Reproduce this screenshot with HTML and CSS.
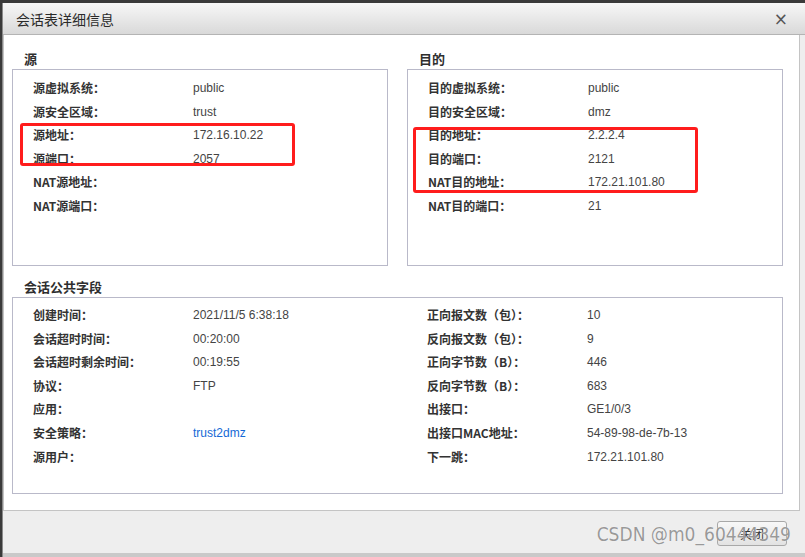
FILE: index.html
```html
<!DOCTYPE html>
<html lang="zh-CN">
<head>
	<meta charset="UTF-8">
	<title>会话表详细信息</title>
	<link rel="stylesheet" href="styles.css">
</head>
<body>
	<div class="dialog">
		<div class="dialog-title">
			<span>会话表详细信息</span>
			<span class="close">&times;</span>
		</div>
		<div class="dialog-body">
			<div class="top-group">
				<div class="group">
					<div class="group-title">源</div>
					<div class="group-box">
						<div class="row"><span class="label">源虚拟系统：</span><span class="value">public</span></div>
						<div class="row"><span class="label">源安全区域：</span><span class="value">trust</span></div>
						<div class="row"><span class="label">源地址：</span><span class="value">172.16.10.22</span></div>
						<div class="row"><span class="label">源端口：</span><span class="value">2057</span></div>
						<div class="row"><span class="label">NAT源地址：</span><span class="value"></span></div>
						<div class="row"><span class="label">NAT源端口：</span><span class="value"></span></div>
						<div class="mark mark-src"></div>
					</div>
				</div>
				<div class="group">
					<div class="group-title">目的</div>
					<div class="group-box">
						<div class="row"><span class="label">目的虚拟系统：</span><span class="value">public</span></div>
						<div class="row"><span class="label">目的安全区域：</span><span class="value">dmz</span></div>
						<div class="row"><span class="label">目的地址：</span><span class="value">2.2.2.4</span></div>
						<div class="row"><span class="label">目的端口：</span><span class="value">2121</span></div>
						<div class="row"><span class="label">NAT目的地址：</span><span class="value">172.21.101.80</span></div>
						<div class="row"><span class="label">NAT目的端口：</span><span class="value">21</span></div>
						<div class="mark mark-dst"></div>
					</div>
				</div>
			</div>
			<div class="group common">
				<div class="group-title">会话公共字段</div>
				<div class="group-box">
					<div class="col">
						<div class="row"><span class="label">创建时间：</span><span class="value">2021/11/5 6:38:18</span></div>
						<div class="row"><span class="label">会话超时时间：</span><span class="value">00:20:00</span></div>
						<div class="row"><span class="label">会话超时剩余时间：</span><span class="value">00:19:55</span></div>
						<div class="row"><span class="label">协议：</span><span class="value">FTP</span></div>
						<div class="row"><span class="label">应用：</span><span class="value"></span></div>
						<div class="row"><span class="label">安全策略：</span><span class="value link">trust2dmz</span></div>
						<div class="row"><span class="label">源用户：</span><span class="value"></span></div>
					</div>
					<div class="col">
						<div class="row"><span class="label">正向报文数（包）：</span><span class="value">10</span></div>
						<div class="row"><span class="label">反向报文数（包）：</span><span class="value">9</span></div>
						<div class="row"><span class="label">正向字节数（B）：</span><span class="value">446</span></div>
						<div class="row"><span class="label">反向字节数（B）：</span><span class="value">683</span></div>
						<div class="row"><span class="label">出接口：</span><span class="value">GE1/0/3</span></div>
						<div class="row"><span class="label">出接口MAC地址：</span><span class="value">54-89-98-de-7b-13</span></div>
						<div class="row"><span class="label">下一跳：</span><span class="value">172.21.101.80</span></div>
					</div>
				</div>
			</div>
		</div>
		<div class="dialog-foot">
			<span class="watermark">CSDN @m0_60444349</span>
			<button class="btn">关闭</button>
		</div>
	</div>
</body>
</html>
```

FILE: styles.css
```css
body {
	margin: 0;
	background: #3a3a3a;
	font-family: "Noto Sans CJK SC", sans-serif;
	color: #333;
	overflow: hidden;
}
.dialog {
	margin: 3px 0 0 2px;
	width: 802px;
	height: 554px;
	background: #eee;
	border-left: 1px solid #8a8a8a;
}
.dialog-title {
	height: 31px;
	background: linear-gradient(#f7f7f7, #d9d9d9);
	border-bottom: 1px solid #b4b4b4;
	display: flex;
	justify-content: space-between;
	align-items: center;
	padding: 0 17px 0 13px;
	font-size: 14px;
	color: #2a2a2a;
}
.close {
	font-family: "DejaVu Sans", sans-serif;
	font-size: 17px;
	color: #555;
}
.dialog-body {
	width: 797px;
	height: 476px;
	box-sizing: border-box;
	background: #fff;
	border: 1px solid #c4c4c4;
	border-top: none;
	padding: 14px 0 0 8px;
}
.top-group {
	display: grid;
	grid-template-columns: 376px 376px;
	column-gap: 19px;
}
.group-title {
	height: 20px;
	line-height: 20px;
	padding-left: 12px;
	font-size: 13px;
	font-weight: bold;
	color: #2e2e2e;
}
.group-box {
	position: relative;
	height: 197px;
	box-sizing: border-box;
	border: 1px solid #b9b9c9;
	padding: 6px 0 0 20px;
}
.common {
	margin-top: 11px;
}
.common .group-box {
	width: 771px;
	display: flex;
	padding-top: 5px;
}
.common .col {
	width: 394px;
	flex-shrink: 0;
}
.common .col + .col {
	width: auto;
	flex: 1;
}
.row {
	display: flex;
	height: 23.6px;
	line-height: 23.6px;
	font-size: 12px;
}
.label {
	width: 160px;
	flex-shrink: 0;
	font-weight: bold;
	color: #333;
}
.value {
	font-family: "Liberation Sans", Arial, sans-serif;
	color: #444;
	padding-top: 1px;
}
.link {
	color: #1469d6;
}
.mark {
	position: absolute;
	border: 3px solid #ff1c1c;
	border-radius: 3px;
}
.mark-src {
	left: 7px;
	top: 53px;
	width: 269px;
	height: 37px;
}
.mark-dst {
	left: 5px;
	top: 57px;
	width: 279px;
	height: 60px;
}
.dialog-foot {
	position: relative;
	height: 46px;
	border-bottom: 4px solid #c9c9c9;
	display: flex;
	justify-content: flex-end;
	align-items: flex-start;
	padding: 10px 18px 0 0;
	box-sizing: border-box;
}
.btn {
	width: 70px;
	height: 25px;
	font-family: "Noto Sans CJK SC", sans-serif;
	font-size: 12px;
	color: #333;
	background: linear-gradient(#f8f8f8, #e2e2e2);
	border: 1px solid #a8a8a8;
	border-radius: 3px;
	padding: 0;
}
.watermark {
	position: absolute;
	right: 14px;
	top: 12px;
	font-family: "DejaVu Sans Condensed", "DejaVu Sans", sans-serif;
	font-size: 19px;
	color: rgba(120, 120, 120, 0.75);
	text-shadow: 0 0 1px #fff;
	pointer-events: none;
}
```
